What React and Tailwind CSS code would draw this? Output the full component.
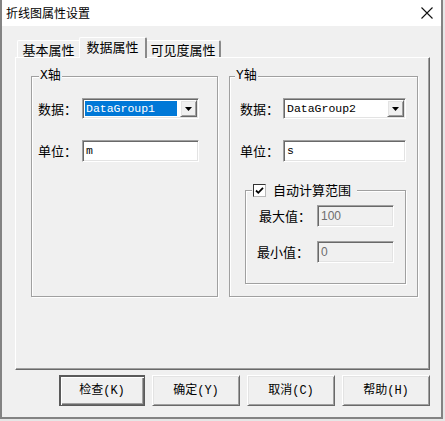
import React from "react";

// win classic bevels
const sunken =
  "border border-t-[#a0a0a0] border-l-[#a0a0a0] border-r-white border-b-white shadow-[inset_1px_1px_0_#696969,inset_-1px_-1px_0_#e3e3e3]";
const raised =
  "border border-t-white border-l-white border-r-[#696969] border-b-[#696969] shadow-[inset_1px_1px_0_#e3e3e3,inset_-1px_-1px_0_#a0a0a0]";
const etched = "border border-[#a0a0a0] shadow-[1px_1px_0_white,inset_1px_1px_0_white]";

const cjk = "font-['Noto_Sans_CJK_SC',sans-serif]";
const mono = "font-['Liberation_Mono','Noto_Sans_CJK_SC',monospace]";

function Combo({ value, selected, width }) {
  return (
    <div className={`flex h-[21px] bg-white ${width} ${sunken}`}>
      <div className="flex flex-1 p-[2px]">
        <span
          className={`flex flex-1 items-center px-[1px] text-[11.5px] ${mono} ${
            selected ? "bg-[#0078d7] text-white" : "text-black"
          }`}
        >
          {value}
        </span>
      </div>
      <div className={`m-[1px] flex w-[17px] items-center justify-center bg-[#f0f0f0] pt-[1px] ${raised}`}>
        <svg width="7" height="4" viewBox="0 0 7 4">
          <path d="M0 0h7L3.5 4z" fill="black" />
        </svg>
      </div>
    </div>
  );
}

function TextBox({ value, width, disabled }) {
  return (
    <div
      className={`flex h-[22px] items-center pl-[3px] ${width} ${sunken} ${
        disabled
          ? "bg-[#f0f0f0] text-[#6d6d6d] text-[12px] font-['Liberation_Sans',sans-serif]"
          : `bg-white text-black text-[11.5px] ${mono}`
      }`}
    >
      {value}
    </div>
  );
}

function Button({ children, width, isDefault }) {
  return (
    <button
      className={`flex h-[31px] items-center justify-center bg-[#f0f0f0] text-[12px] text-black ${mono} ${width} ${
        isDefault
          ? "border border-[#5a5a5a] shadow-[inset_1px_1px_0_#5a5a5a,inset_2px_2px_0_white,inset_-1px_-1px_0_#696969,inset_-2px_-2px_0_#a0a0a0]"
          : raised
      }`}
    >
      {children}
    </button>
  );
}

export default function App() {
  return (
    <div className="h-[421px] w-[445px] bg-[#e6e6e6]">
      <div className={`flex h-[419px] w-[443px] flex-col border-x-2 border-b-2 border-[#838383] bg-[#f0f0f0] ${cjk}`}>
        {/* title bar */}
        <div className="flex h-[26px] items-center justify-between bg-white pl-[4px] pr-[8px]">
          <span className="text-[12px] text-black">折线图属性设置</span>
          <svg width="12" height="12" viewBox="0 0 12 12">
            <path d="M0.5 0.5L11.5 11.5M11.5 0.5L0.5 11.5" stroke="#111" strokeWidth="1.1" />
          </svg>
        </div>

        {/* tabs */}
        <div className="relative z-10 -mb-px mt-[11px] flex h-[21px] items-end pl-[15px] text-[13px] text-black">
          <div className="mb-[1px] flex h-[17px] w-[62px] items-center justify-center rounded-tl-[2px] border-l border-t border-white pt-[1px]">
            基本属性
          </div>
          <div className="flex h-[21px] w-[68px] items-center justify-center rounded-t-[2px] border-l border-r-2 border-t border-l-white border-r-[#8a8a8a] border-t-white bg-[#f0f0f0] pb-[2px]">
            数据属性
          </div>
          <div className="mb-[1px] flex h-[17px] w-[74px] items-center justify-center rounded-tr-[2px] border-r-2 border-t border-r-[#8a8a8a] border-t-white pt-[1px]">
            可见度属性
          </div>
        </div>

        {/* tab panel */}
        <div className="ml-[13px] flex h-[313px] w-[415px] gap-[11px] border border-l-white border-t-white border-r-[#696969] border-b-[#696969] pl-[15px] pt-[11px] shadow-[inset_-1px_-1px_0_#a0a0a0] text-[13px] text-black">
          {/* X axis */}
          <fieldset className={`h-[228px] w-[187px] ${etched}`}>
            <legend className={`ml-[7px] bg-[#f0f0f0] px-[1px] text-[13px] leading-[14px] ${mono}`}>X轴</legend>
            <div className="pl-[6px] pt-[15px]">
              <div className="flex h-[21px] items-center">
                <span className="w-[44px]">数据：</span>
                <Combo value="DataGroup1" selected width="w-[117px]" />
              </div>
              <div className="mt-[21px] flex h-[22px] items-center">
                <span className="w-[44px]">单位：</span>
                <TextBox value="m" width="w-[117px]" />
              </div>
            </div>
          </fieldset>

          {/* Y axis */}
          <fieldset className={`h-[228px] w-[189px] ${etched}`}>
            <legend className={`ml-[5px] bg-[#f0f0f0] px-[1px] text-[13px] leading-[14px] ${mono}`}>Y轴</legend>
            <div className="pl-[10px] pt-[15px]">
              <div className="flex h-[21px] items-center">
                <span className="w-[43px]">数据：</span>
                <Combo value="DataGroup2" width="w-[123px]" />
              </div>
              <div className="mt-[21px] flex h-[22px] items-center">
                <span className="w-[43px]">单位：</span>
                <TextBox value="s" width="w-[123px]" />
              </div>

              <fieldset className={`ml-[5px] mt-[21px] h-[101px] w-[161px] ${etched}`}>
                <legend className="ml-[6px] bg-[#f0f0f0] pl-[1px] pr-[6px]">
                  <span className="flex h-[14px] items-center gap-[7px] text-[13px]">
                    <span className="flex h-[13px] w-[13px] items-center justify-center border border-t-[#333] border-l-[#333] border-r-[#b8b8b8] border-b-[#b8b8b8] bg-white">
                      <svg width="9" height="9" viewBox="0 0 9 9">
                        <path d="M1 4.5L3.3 6.8L8 1.8" stroke="black" strokeWidth="1.8" fill="none" />
                      </svg>
                    </span>
                    自动计算范围
                  </span>
                </legend>
                <div className="pl-[13px] pt-[8px]">
                  <div className="flex h-[21px] items-center">
                    <span className="w-[58px]">最大值：</span>
                    <TextBox value="100" width="w-[77px]" disabled />
                  </div>
                  <div className="mt-[15px] flex h-[22px] items-center">
                    <span className="-ml-[2px] w-[60px]">最小值：</span>
                    <TextBox value="0" width="w-[77px]" disabled />
                  </div>
                </div>
              </fieldset>
            </div>
          </fieldset>
        </div>

        {/* buttons */}
        <div className="ml-[57px] mt-[5px] flex gap-[7px]">
          <Button width="w-[86px]" isDefault>
            检查(K)
          </Button>
          <Button width="w-[88px]">确定(Y)</Button>
          <Button width="w-[88px]">取消(C)</Button>
          <Button width="w-[88px]">帮助(H)</Button>
        </div>
      </div>
    </div>
  );
}
